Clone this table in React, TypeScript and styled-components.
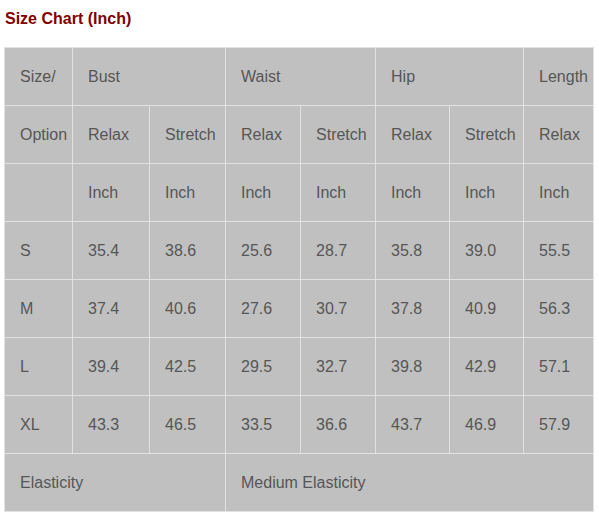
import React from "react";
import styled, { createGlobalStyle } from "styled-components";

const GlobalStyle = createGlobalStyle`
  html, body {
    margin: 0;
    padding: 0;
    background: #ffffff;
  }
  body {
    font-family: "Liberation Sans", Arial, sans-serif;
  }
`;

const Page = styled.div`
  padding: 10px 0 0 4px;
  width: 599px;
  box-sizing: border-box;
`;

const Title = styled.h2`
  margin: 0 0 19px 1px;
  font-size: 16px;
  line-height: 18px;
  font-weight: bold;
  color: #800000;
  font-family: "Liberation Sans", Arial, sans-serif;
`;

const Table = styled.table`
  border-collapse: collapse;
  table-layout: fixed;
  width: 590px;
  background: #c0c0c0;
`;

const Cell = styled.td`
  height: 58px;
  padding: 0 0 0 15px;
  border: 1px solid #e2e2e2;
  color: #565656;
  font-size: 16px;
  line-height: 18px;
  vertical-align: middle;
  text-align: left;
  white-space: nowrap;
  box-sizing: border-box;
`;

const colWidths = [68, 77, 76, 75, 75, 74, 74, 70];

const sizes: string[][] = [
  ["S", "35.4", "38.6", "25.6", "28.7", "35.8", "39.0", "55.5"],
  ["M", "37.4", "40.6", "27.6", "30.7", "37.8", "40.9", "56.3"],
  ["L", "39.4", "42.5", "29.5", "32.7", "39.8", "42.9", "57.1"],
  ["XL", "43.3", "46.5", "33.5", "36.6", "43.7", "46.9", "57.9"],
];

export default function App() {
  return (
    <>
      <GlobalStyle />
      <Page>
        <Title>Size Chart (Inch)</Title>
        <Table>
          <colgroup>
            {colWidths.map((w, i) => (
              <col key={i} style={{ width: `${w}px` }} />
            ))}
          </colgroup>
          <tbody>
            <tr>
              <Cell>Size/</Cell>
              <Cell colSpan={2}>Bust</Cell>
              <Cell colSpan={2}>Waist</Cell>
              <Cell colSpan={2}>Hip</Cell>
              <Cell>Length</Cell>
            </tr>
            <tr>
              <Cell>Option</Cell>
              <Cell>Relax</Cell>
              <Cell>Stretch</Cell>
              <Cell>Relax</Cell>
              <Cell>Stretch</Cell>
              <Cell>Relax</Cell>
              <Cell>Stretch</Cell>
              <Cell>Relax</Cell>
            </tr>
            <tr>
              <Cell></Cell>
              {Array.from({ length: 7 }).map((_, i) => (
                <Cell key={i}>Inch</Cell>
              ))}
            </tr>
            {sizes.map((row) => (
              <tr key={row[0]}>
                {row.map((v, i) => (
                  <Cell key={i}>{v}</Cell>
                ))}
              </tr>
            ))}
            <tr>
              <Cell colSpan={3}>Elasticity</Cell>
              <Cell colSpan={5}>Medium Elasticity</Cell>
            </tr>
          </tbody>
        </Table>
      </Page>
    </>
  );
}
